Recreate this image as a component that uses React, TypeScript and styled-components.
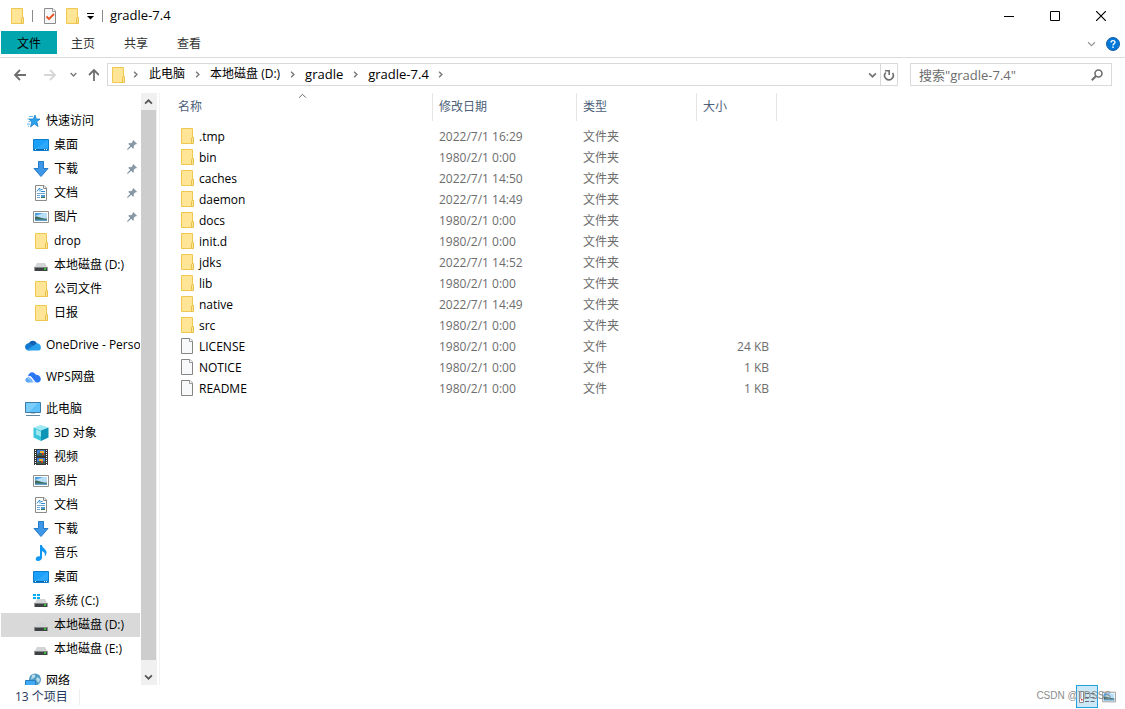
import React from "react";
import styled, { createGlobalStyle } from "styled-components";

const Global = createGlobalStyle`
  * { box-sizing: border-box; }
  body {
    margin: 0;
    background: #fff;
    color: #000;
    font-family: "Open Sans", "Noto Sans CJK SC", sans-serif;
    font-size: 12px;
    line-height: 20px;
  }
  button, input { font: inherit; color: inherit; }
  svg { display: block; flex: none; }
`;

const Window = styled.div`
  display: flex;
  flex-direction: column;
  height: 100vh;
`;

const BareButton = styled.button`
  display: flex;
  align-items: center;
  justify-content: center;
  padding: 0;
  border: 0;
  background: none;
`;

/* Title bar */
const TitleBar = styled.header`
  display: flex;
  align-items: center;
  height: 31px;
  padding: 0 1px 0 9px;
`;
const Separator = styled.span`
  width: 1px;
  height: 12px;
  background: #8a8a8a;
`;
const QuickTools = styled.div`
  display: flex;
  align-items: center;
  padding: 0 8px 0 7px;
`;
const ToolButton = styled(BareButton)<{ $gap: number }>`
  margin-left: ${(p) => p.$gap}px;
`;
const Title = styled.h1`
  flex: 1;
  margin: 0;
  padding: 0 0 2px 7px;
  font-size: 13px;
  font-weight: 400;
`;
const CaptionButton = styled(BareButton)`
  width: 46px;
  height: 30px;
`;
const Captions = styled.div`
  display: flex;
`;

/* Ribbon */
const Ribbon = styled.nav`
  display: flex;
  height: 27px;
  padding-left: 1px;
  border-bottom: 1px solid #dadbdc;
`;
const Tab = styled(BareButton)<{ $file?: boolean }>`
  width: ${(p) => (p.$file ? 56 : 53)}px;
  height: 23px;
  padding: ${(p) => (p.$file ? "2px 0 0" : "2px 1px 0 0")};
  color: ${(p) => (p.$file ? "#000" : "#333")};
  background: ${(p) => (p.$file ? "#00a5ae" : "none")};
`;
const RibbonTools = styled.div`
  display: flex;
  align-items: center;
  gap: 10px;
  margin-left: auto;
  padding-right: 5px;
`;

/* Address row */
const AddressRow = styled.div`
  display: flex;
  align-items: center;
  height: 35px;
  padding: 0 13px 2px 10px;
`;
const NavButton = styled(BareButton)<{ $w: number }>`
  width: ${(p) => p.$w}px;
  height: 22px;
`;
const AddressBox = styled.div`
  display: flex;
  flex: 1;
  align-items: center;
  height: 23px;
  padding-left: 2px;
  border: 1px solid #d9d9d9;
`;
const Crumbs = styled.div`
  display: flex;
  flex: 1;
  align-items: center;
`;
const Crumb = styled.a<{ $latin?: boolean }>`
  padding-bottom: 2px;
  color: #000;
  font-size: ${(p) => (p.$latin ? 13 : 12)}px;
  text-decoration: none;
  white-space: nowrap;
`;
const CrumbArrow = styled(BareButton)<{ $first?: boolean }>`
  width: ${(p) => (p.$first ? 23 : 25)}px;
  height: 21px;
  padding-right: ${(p) => (p.$first ? 4 : 1)}px;
`;
const RefreshButton = styled(BareButton)`
  width: 17px;
  height: 21px;
  border-left: 1px solid #d9d9d9;
`;
const SearchBox = styled.label`
  display: flex;
  align-items: center;
  width: 202px;
  height: 23px;
  margin-left: 12px;
  padding: 0 8px;
  border: 1px solid #d9d9d9;
`;
const SearchInput = styled.input`
  flex: 1;
  min-width: 0;
  height: 20px;
  padding: 0;
  border: 0;
  outline: 0;
  background: none;
  font-size: 13px;
  &::placeholder { color: #6d6d6d; opacity: 1; }
`;

/* Body */
const Body = styled.div`
  display: flex;
  flex: 1;
  min-height: 0;
`;
const Sidebar = styled.aside`
  display: flex;
  width: 160px;
  border-right: 1px solid #f3f3f3;
`;
const Tree = styled.nav`
  width: 140px;
  padding: 16px 0 0 1px;
  overflow: hidden;
`;
const Group = styled.ul`
  margin: 0 0 8px;
  padding: 0;
  list-style: none;
`;
const TreeItem = styled.a<{ $root?: boolean; $active?: boolean }>`
  display: flex;
  align-items: center;
  height: 24px;
  padding: 0 3px 0 ${(p) => (p.$root ? 24 : 32)}px;
  gap: 5px;
  color: #000;
  background: ${(p) => (p.$active ? "#d9d9d9" : "none")};
  text-decoration: none;
  white-space: nowrap;
`;
const PinSlot = styled.span`
  margin-left: auto;
`;
const Scrollbar = styled.div`
  display: flex;
  flex-direction: column;
  width: 16px;
  margin-left: 1px;
  background: #f0f0f0;
`;
const ScrollButton = styled(BareButton)`
  width: 15px;
  height: 17px;
`;
const Thumb = styled.div`
  flex: 1;
  width: 15px;
  margin-bottom: 8px;
  background: #cdcdcd;
`;

/* File list */
const Files = styled.main`
  flex: 1;
  min-width: 0;
`;
const Table = styled.table`
  width: 617px;
  table-layout: fixed;
  border-collapse: collapse;
  color: #6d6d6d;
`;
const Col = styled.col<{ $w: number }>`
  width: ${(p) => p.$w}px;
`;
const HeadCell = styled.th`
  height: 33px;
  padding: 0;
  vertical-align: top;
  font-weight: 400;
`;
const HeadButton = styled(BareButton)<{ $first?: boolean }>`
  position: relative;
  justify-content: flex-start;
  width: 100%;
  height: 28px;
  padding-left: ${(p) => (p.$first ? 18 : 6)}px;
  border-right: 1px solid #e5e5e5;
  color: #4c607a;
`;
const SortMark = styled.span`
  position: absolute;
  top: 0;
  right: 125px;
`;
const Cell = styled.td<{ $right?: boolean }>`
  height: 21px;
  padding: 0 8px 0 6px;
  text-align: ${(p) => (p.$right ? "right" : "left")};
`;
const NameCell = styled.td`
  height: 21px;
  padding: 0 0 0 19px;
  color: #000;
`;
const FileName = styled.span`
  display: flex;
  align-items: flex-start;
  gap: 4px;
  svg { margin-top: 1px; }
`;

/* Status bar */
const Status = styled.footer`
  position: relative;
  display: flex;
  align-items: center;
  height: 24px;
  padding: 0 5px 0 15px;
  color: #1e395b;
`;
const Count = styled.span`
  padding-right: 11px;
  border-right: 1px solid #eee;
  line-height: 16px;
`;
const ViewButtons = styled.div`
  display: flex;
  align-self: flex-start;
  margin-left: auto;
`;
const ViewButton = styled(BareButton)<{ $on?: boolean }>`
  width: 22px;
  height: 23px;
  border: 1px solid ${(p) => (p.$on ? "#26a0da" : "transparent")};
  background: ${(p) => (p.$on ? "#cbe8f6" : "none")};
`;
const Watermark = styled.span`
  position: absolute;
  top: 1px;
  right: 14px;
  color: #8c8c8c;
  font-family: "Liberation Sans", sans-serif;
  font-size: 10px;
`;

/* Icons */
const Folder = () => (
  <svg width="16" height="16" viewBox="-1 0 16 16">
    <path d="M1.500 .5h11v15h-11z" fill="#ffe595" stroke="#efc851" />
    <path d="M11.500 15.500v-5l.5-1h1.500v6z" fill="#ffe494" stroke="#e8c04a" />
  </svg>
);
const Page = () => (
  <svg width="16" height="16" viewBox="-1 0 16 16">
    <path d="M1.500 .5h8.500l2.500 2.500v12.500h-11z" fill="#f8f9fa" stroke="#858585" />
    <path d="M9.500 .5v3h3" fill="#fff" stroke="#9a9a9a" />
  </svg>
);
const CheckPage = () => (
  <svg width="16" height="16" viewBox="0 0 16 16">
    <path d="M2.500 .5h8.500l2.500 2.500v12.500h-11z" fill="#f6f7f8" stroke="#8a8a8a" />
    <path d="M10.500 .5v3h3" fill="#fff" stroke="#9a9a9a" />
    <path d="M4.500 8.500l2.500 2.500 5-5" fill="none" stroke="#e8501e" strokeWidth="1.800" />
  </svg>
);
const Star = () => (
  <svg width="16" height="16" viewBox="0 0 16 16">
    <path d="M10 2l1.300 4H15l-3.200 2.700 1.300 4.800-3.800-2.600-3.800 3.100 1.200-5L4 6h4.300z" fill="#2aa3ec" stroke="#1277c4" strokeWidth=".7" />
    <path d="M4 3.500h4M2.500 6h2M3.500 8.500h2M2 11h3M3 13h1" stroke="#5bb7ec" />
  </svg>
);
const Desktop = () => (
  <svg width="16" height="16" viewBox="0 0 16 16">
    <path d="M.5 2.500h15v11H.5z" fill="#1ba1fb" stroke="#0d7dd0" />
    <path d="M15 3v7L6 13H1z" fill="#3db0ff" opacity=".5" />
    <path d="M1 12.500h14" stroke="#0a63ab" />
    <path d="M2 12.500h1M11 12.500h1M13 12.500h1" stroke="#fff" />
  </svg>
);
const Down = () => (
  <svg width="16" height="16" viewBox="0 0 16 16">
    <path d="M5.500 .5h5v7h4.500L8 15.500 1 7.500h4.500z" fill="#3d97e8" stroke="#2478c8" />
  </svg>
);
const Doc = () => (
  <svg width="16" height="16" viewBox="0 0 16 16">
    <path d="M2.500 .5h8.500l2.500 2.500v12.500h-11z" fill="#fff" stroke="#8b8b8b" />
    <path d="M10.500 .5v3h3" fill="none" stroke="#8b8b8b" />
    <path d="M4 6.500L6 3.500h1v3M8 4.500h1.500M8 6.500h4" fill="none" stroke="#2f8bd6" />
    <path d="M4 8.500h8M4 10.500h3M4 12.500h3" stroke="#6ca4cf" />
    <path d="M8 10h4v3H8z" fill="#4b9bd0" />
    <path d="M8 12.500h4" stroke="#3c7a5c" />
  </svg>
);
const Picture = ({ size = 16 }: { size?: number }) => (
  <svg width={size} height={size} viewBox="0 0 16 16">
    <path d="M.5 2.500h15v11H.5z" fill="#fff" stroke="#929292" />
    <path d="M2 4h12v8H2z" fill="#b9def7" />
    <path d="M2 4h8L2 7z" fill="#4aa0e6" />
    <path d="M2 7.500c4 0 6 2 12 2.200V11H2z" fill="#3c6b5c" />
    <path d="M2 10.500h12V12H2z" fill="#5f9fc9" />
  </svg>
);
const Drive = ({ system }: { system?: boolean }) => (
  <svg width="16" height="16" viewBox="0 0 16 16">
    {system && <path d="M0 1h3v2H0zM4 1h3v2H4zM0 4h3v2H0zM4 4h3v2H4z" fill="#00adef" />}
    <path d="M4 6h8l2.500 4.500h-13z" fill="#d2d4d6" />
    <path d="M1.500 10h13v4h-13z" fill="#3f4245" />
    <path d="M1.500 10.500h13" stroke="#85888a" />
    <path d="M11 12h2" stroke="#3be03b" strokeWidth="1.500" />
  </svg>
);
const OneDrive = () => (
  <svg width="16" height="16" viewBox="0 0 16 16">
    <path d="M4 6a4.500 4.500 0 0 1 8.200 1L8 11 1 9z" fill="#0f5fb3" />
    <path d="M3.500 13.500A3.600 3.600 0 1 1 5.500 6.800L13 12z" fill="#1379d0" />
    <path d="M2 13l8-5.500a3.300 3.300 0 0 1 5.700 2.800c.6 1.600-.4 3.200-2.200 3.200H3.500z" fill="#29a0ec" />
  </svg>
);
const Wps = () => (
  <svg width="16" height="16" viewBox="0 0 16 16">
    <path d="M3 7.500C3.500 3 8.500 1.500 10.500 5.500c3 .2 5.300 2 5.300 4.500 0 2-1.300 3.500-3.300 3.500H11L5.500 7z" fill="#2b78f2" />
    <path d="M3.500 7.200L10 13.500H6.500L2.700 8z" fill="#6fb4ff" />
    <path d="M2.500 8.500l4 5H3C-.3 13.500-.5 9.500 2.500 8.500z" fill="#5ba5fb" />
    <path d="M3.500 7.500C6 8 8 10 8.500 13.500" fill="none" stroke="#fff" />
  </svg>
);
const Computer = () => (
  <svg width="16" height="16" viewBox="0 0 16 16">
    <path d="M.5 1.500h15v10H.5z" fill="#5cc0fb" stroke="#3b7ba6" />
    <path d="M1 2h12L4 11H1z" fill="#8fd5ff" opacity=".6" />
    <path d="M6 12.500h4" stroke="#b9c8d2" />
    <path d="M1 14.500h14" stroke="#5f88a3" />
  </svg>
);
const Cube = () => (
  <svg width="16" height="16" viewBox="0 0 16 16">
    <path d="M8 0l7.500 2.500L8 5.500.5 2.500z" fill="#9ee9f4" />
    <path d="M.5 2.500L8 5.500V16L.5 12.500z" fill="#3cc6dc" />
    <path d="M15.500 2.500L8 5.500V16l7.500-3.500z" fill="#0e95b5" />
    <path d="M3 4.500l5 2 0 5-5-2z" fill="#c5f3f8" opacity=".7" />
  </svg>
);
const Film = () => (
  <svg width="16" height="16" viewBox="0 0 16 16">
    <path d="M1 0h14v16H1z" fill="#373737" />
    <path d="M2.500 1v15M13.500 1v15" stroke="#fff" strokeDasharray="1 1" />
    <path d="M4 1h8v6H4zM4 9h8v6H4z" fill="#3f7fd8" />
    <path d="M4 6l3-3 2 2 3-1v3H4zM4 14l3-3 2 2 3-1v3H4z" fill="#3b5f4d" />
    <path d="M7 2h4v2H7zM6 10h4v2H6z" fill="#f0b428" />
    <path d="M9 4h2v2H9zM8 12h2v2H8z" fill="#c83a2c" />
  </svg>
);
const Music = () => (
  <svg width="16" height="16" viewBox="0 0 16 16">
    <path d="M7 0h2c0 3 4.500 4 4.500 7.500 0 2-1 3.200-1.800 3.800.8-2.500-.2-4.300-2.700-5.300v6.500C9 14.800 7 16 5 16s-2.500-1.300-2.200-2.500C3.200 11.800 5 11 7 11.300z" fill="#0e97f5" />
  </svg>
);
const Network = () => (
  <svg width="16" height="16" viewBox="0 0 16 16">
    <circle cx="10" cy="6.500" r="6" fill="#4f9cc4" />
    <path d="M7 2c3-1 4 0 3 2s-3 1-4 3M12 4l3 2-1 4-3-3z" fill="#b8dbe9" />
    <path d="M.5 7.500h10v7H.5z" fill="#3ea9f5" stroke="#2a7dbb" />
  </svg>
);
const Pin = () => (
  <svg width="10" height="10" viewBox="0 0 10 10">
    <path d="M6.200 0L10 3.800l-1 .6-.7-.2-1.600 1.700.2 2L6 8.700 4.200 6.800.8 10 0 9.200l3.200-3.400L1.300 4l.8-.9 2 .2 1.700-1.600-.2-.7z" fill="#8697a5" />
  </svg>
);

type ChevronProps = { dir: "up" | "down" | "right"; w?: number; color?: string; weight?: number };
const turns = { up: "M1 5.500L5 1.500 9 5.500", down: "M1 1.500L5 5.500 9 1.500", right: "M1.500 1L5.500 5 1.500 9" };
const Chevron = ({ dir, w = 9, color = "#555", weight = 1.5 }: ChevronProps) => (
  <svg
    width={dir === "right" ? Math.round(w * 0.7) : w}
    height={dir === "right" ? w : Math.round(w * 0.7)}
    viewBox={dir === "right" ? "0 0 7 10" : "0 0 10 7"}
  >
    <path d={turns[dir]} fill="none" stroke={color} strokeWidth={weight} />
  </svg>
);
const Arrow = ({ d, color }: { d: string; color: string }) => (
  <svg width="14" height="14" viewBox="0 0 14 14">
    <path d={d} fill="none" stroke={color} strokeWidth="1.800" />
  </svg>
);

type Node = { label: string; icon: React.ReactNode; root?: boolean; pin?: boolean; active?: boolean };
const groups: Node[][] = [
  [
    { label: "快速访问", icon: <Star />, root: true },
    { label: "桌面", icon: <Desktop />, pin: true },
    { label: "下载", icon: <Down />, pin: true },
    { label: "文档", icon: <Doc />, pin: true },
    { label: "图片", icon: <Picture />, pin: true },
    { label: "drop", icon: <Folder /> },
    { label: "本地磁盘 (D:)", icon: <Drive /> },
    { label: "公司文件", icon: <Folder /> },
    { label: "日报", icon: <Folder /> },
  ],
  [{ label: "OneDrive - Personal", icon: <OneDrive />, root: true }],
  [{ label: "WPS网盘", icon: <Wps />, root: true }],
  [
    { label: "此电脑", icon: <Computer />, root: true },
    { label: "3D 对象", icon: <Cube /> },
    { label: "视频", icon: <Film /> },
    { label: "图片", icon: <Picture /> },
    { label: "文档", icon: <Doc /> },
    { label: "下载", icon: <Down /> },
    { label: "音乐", icon: <Music /> },
    { label: "桌面", icon: <Desktop /> },
    { label: "系统 (C:)", icon: <Drive system /> },
    { label: "本地磁盘 (D:)", icon: <Drive />, active: true },
    { label: "本地磁盘 (E:)", icon: <Drive /> },
  ],
  [{ label: "网络", icon: <Network />, root: true }],
];

const files: [string, string, string?][] = [
  [".tmp", "2022/7/1 16:29"],
  ["bin", "1980/2/1 0:00"],
  ["caches", "2022/7/1 14:50"],
  ["daemon", "2022/7/1 14:49"],
  ["docs", "1980/2/1 0:00"],
  ["init.d", "1980/2/1 0:00"],
  ["jdks", "2022/7/1 14:52"],
  ["lib", "1980/2/1 0:00"],
  ["native", "2022/7/1 14:49"],
  ["src", "1980/2/1 0:00"],
  ["LICENSE", "1980/2/1 0:00", "24 KB"],
  ["NOTICE", "1980/2/1 0:00", "1 KB"],
  ["README", "1980/2/1 0:00", "1 KB"],
];

const crumbs = [
  { label: "此电脑" },
  { label: "本地磁盘 (D:)" },
  { label: "gradle", latin: true },
  { label: "gradle-7.4", latin: true },
];

export default function App() {
  return (
    <Window>
      <Global />
      <TitleBar>
        <Folder />
        <QuickTools>
          <Separator />
          <ToolButton $gap={9} aria-label="属性"><CheckPage /></ToolButton>
          <ToolButton $gap={6} aria-label="新建文件夹"><Folder /></ToolButton>
          <ToolButton $gap={6} aria-label="自定义快速访问工具栏">
            <svg width="8" height="8" viewBox="0 0 8 8">
              <path d="M1 1.500h7" stroke="#000" />
              <path d="M1 4h7L4.500 7.500z" fill="#000" />
            </svg>
          </ToolButton>
        </QuickTools>
        <Separator />
        <Title>gradle-7.4</Title>
        <Captions>
          <CaptionButton aria-label="最小化">
            <svg width="10" height="10"><path d="M0 5.500h10" stroke="#000" /></svg>
          </CaptionButton>
          <CaptionButton aria-label="最大化">
            <svg width="10" height="10"><path d="M.5.5h9v9h-9z" fill="none" stroke="#000" /></svg>
          </CaptionButton>
          <CaptionButton aria-label="关闭">
            <svg width="10" height="10"><path d="M0 0l10 10M10 0L0 10" stroke="#000" strokeWidth="1.200" /></svg>
          </CaptionButton>
        </Captions>
      </TitleBar>

      <Ribbon>
        <Tab $file>文件</Tab>
        <Tab>主页</Tab>
        <Tab>共享</Tab>
        <Tab>查看</Tab>
        <RibbonTools>
          <BareButton aria-label="展开功能区"><Chevron dir="down" color="#999" /></BareButton>
          <BareButton aria-label="帮助">
            <svg width="14" height="14" viewBox="0 0 14 14">
              <circle cx="7" cy="7" r="6.500" fill="#0078d7" stroke="#1c5fa3" />
              <path d="M5 5.500C5 3 9 3 9 5.300 9 6.800 7 6.800 7 8.500" fill="none" stroke="#fff" strokeWidth="1.400" />
              <path d="M6.300 9.500h1.400V11H6.300z" fill="#fff" />
            </svg>
          </BareButton>
        </RibbonTools>
      </Ribbon>

      <AddressRow>
        <NavButton $w={20} aria-label="后退"><Arrow d="M13 7H2M7 2L2 7l5 5" color="#6e6e6e" /></NavButton>
        <NavButton $w={40} aria-label="前进"><Arrow d="M1 7h11M7 2l5 5-5 5" color="#d6d6d6" /></NavButton>
        <NavButton $w={7} aria-label="最近位置"><Chevron dir="down" w={7} color="#777" weight={2} /></NavButton>
        <NavButton $w={30} aria-label="上移"><Arrow d="M9 13V2M4 7l5-5 5 5" color="#6e6e6e" /></NavButton>
        <AddressBox>
          <Folder />
          <Crumbs>
            <CrumbArrow $first aria-label="展开"><Chevron dir="right" w={7} color="#777" weight={2} /></CrumbArrow>
            {crumbs.map((c) => (
              <React.Fragment key={c.label}>
                <Crumb href="#" $latin={c.latin}>{c.label}</Crumb>
                <CrumbArrow aria-label="展开"><Chevron dir="right" w={7} color="#777" weight={2} /></CrumbArrow>
              </React.Fragment>
            ))}
          </Crumbs>
          <NavButton $w={16} aria-label="以前的位置"><Chevron dir="down" color="#777" weight={2} /></NavButton>
          <RefreshButton aria-label="刷新">
            <svg width="12" height="12" viewBox="0 0 12 12">
              <path d="M2.800 3.500A4.300 4.300 0 1 0 9.500 4" fill="none" stroke="#6e6e6e" strokeWidth="1.600" />
              <path d="M2 1.800h4.200v4.200" fill="none" stroke="#6e6e6e" strokeWidth="1.600" />
            </svg>
          </RefreshButton>
        </AddressBox>
        <SearchBox>
          <SearchInput aria-label="搜索" placeholder={'搜索"gradle-7.4"'} />
          <svg width="12" height="12" viewBox="0 0 12 12">
            <circle cx="7.500" cy="4.500" r="3.500" fill="none" stroke="#6e6e6e" strokeWidth="1.600" />
            <path d="M5 7L.8 11.200" stroke="#6e6e6e" strokeWidth="2" />
          </svg>
        </SearchBox>
      </AddressRow>

      <Body>
        <Sidebar>
          <Tree>
            {groups.map((g, i) => (
              <Group key={i}>
                {g.map((n) => (
                  <li key={n.label}>
                    <TreeItem href="#" $root={n.root} $active={n.active}>
                      {n.icon}
                      <span>{n.label}</span>
                      {n.pin && <PinSlot><Pin /></PinSlot>}
                    </TreeItem>
                  </li>
                ))}
              </Group>
            ))}
          </Tree>
          <Scrollbar>
            <ScrollButton aria-label="向上滚动"><Chevron dir="up" weight={2} /></ScrollButton>
            <Thumb />
            <ScrollButton aria-label="向下滚动"><Chevron dir="down" weight={2} /></ScrollButton>
          </Scrollbar>
        </Sidebar>
        <Files>
          <Table>
            <colgroup>
              <Col $w={273} />
              <Col $w={144} />
              <Col $w={120} />
              <Col $w={80} />
            </colgroup>
            <thead>
              <tr>
                <HeadCell>
                  <HeadButton $first>
                    名称
                    <SortMark><Chevron dir="up" weight={1} /></SortMark>
                  </HeadButton>
                </HeadCell>
                <HeadCell><HeadButton>修改日期</HeadButton></HeadCell>
                <HeadCell><HeadButton>类型</HeadButton></HeadCell>
                <HeadCell><HeadButton>大小</HeadButton></HeadCell>
              </tr>
            </thead>
            <tbody>
              {files.map(([name, date, size]) => (
                <tr key={name}>
                  <NameCell>
                    <FileName>
                      {size ? <Page /> : <Folder />}
                      {name}
                    </FileName>
                  </NameCell>
                  <Cell>{date}</Cell>
                  <Cell>{size ? "文件" : "文件夹"}</Cell>
                  <Cell $right>{size}</Cell>
                </tr>
              ))}
            </tbody>
          </Table>
        </Files>
      </Body>

      <Status>
        <Count>13 个项目</Count>
        <ViewButtons>
          <ViewButton $on aria-label="详细信息">
            <svg width="16" height="14" viewBox="0 0 16 14">
              <path d="M.5 1.500h4v11h-4z" fill="#fff" stroke="#8b8b8b" />
              <path d="M2 9h1.500v1.500H2z" fill="#e03030" />
              <path d="M6 3.500h4M11.500 3.500h4M6 7.500h4M11.500 7.500h4M6 11.500h4M11.500 11.500h4" stroke="#5f6a72" />
            </svg>
          </ViewButton>
          <ViewButton aria-label="大缩略图"><Picture size={14} /></ViewButton>
        </ViewButtons>
        <Watermark>CSDN @TDSSS</Watermark>
      </Status>
    </Window>
  );
}
